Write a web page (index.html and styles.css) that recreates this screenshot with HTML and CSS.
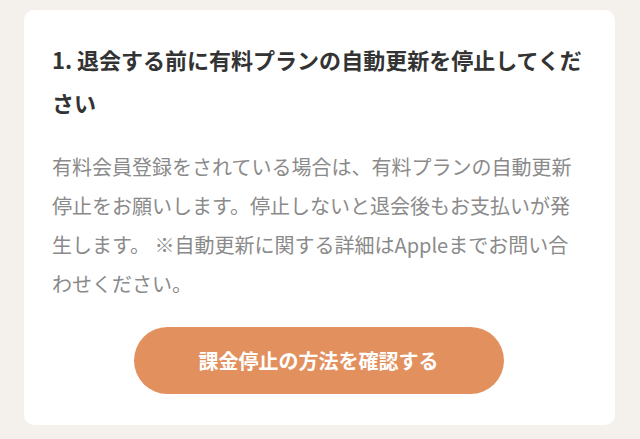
FILE: index.html
```html
<!DOCTYPE html>
<html lang="ja">
<head>
<meta charset="utf-8">
<link rel="stylesheet" href="styles.css">
</head>
<body>
<div class="page">
  <section class="card">
    <h2 class="card-title">1. 退会する前に有料プランの自動更新を停止してください</h2>
    <p class="card-text">有料会員登録をされている場合は、有料プランの自動更新停止をお願いします。停止しないと退会後もお支払いが発生します。 ※自動更新に関する詳細はAppleまでお問い合わせください。</p>
    <div class="actions">
      <a class="btn" href="#">課金停止の方法を確認する</a>
    </div>
  </section>
</div>
</body>
</html>
```
FILE: styles.css
```css
html, body {
  margin: 0;
  padding: 0;
  background: #f4f0ec;
}
body {
  font-family: "Noto Sans CJK JP", "Noto Sans", sans-serif;
}
.page {
  padding: 10px 25px 14px 24px;
}
.card {
  background: #ffffff;
  border-radius: 10px;
  padding: 28px 30px 31px 28px;
}
.card-title {
  margin: 0;
  font-size: 22px;
  font-weight: 700;
  line-height: 43px;
  color: #333333;
}
.card-text {
  margin: 23px 0 0;
  font-size: 20px;
  font-weight: 400;
  line-height: 39px;
  color: #8a8a8a;
}
.actions {
  display: flex;
  justify-content: center;
  margin-top: 24px;
}
.btn {
  display: flex;
  align-items: center;
  justify-content: center;
  width: 370px;
  height: 67px;
  border-radius: 34px;
  background: #e3905f;
  color: #ffffff;
  font-size: 20px;
  font-weight: 700;
  text-decoration: none;
}
```
